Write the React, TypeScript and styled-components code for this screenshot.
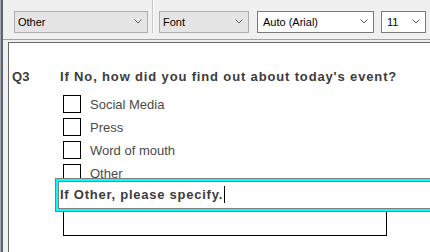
import React from 'react';
import styled, { createGlobalStyle } from 'styled-components';

const GlobalStyle = createGlobalStyle`
  html, body {
    margin: 0;
    padding: 0;
    background: #f0f0f0;
    overflow: hidden;
  }
  body {
    font-family: "Liberation Sans", Arial, sans-serif;
  }
`;

const options = ['Social Media', 'Press', 'Word of mouth', 'Other'];

const Chevron = () => (
  <svg width="8" height="5" viewBox="0 0 8 5">
    <path d="M0.5 0.5 L4 4 L7.5 0.5" fill="none" stroke="#606060" strokeWidth="1" />
  </svg>
);

const App = () => {
  return (
    <>
      <GlobalStyle />
      <Window>
        <Main>
          <Toolbar>
            <Combo $width={134} $flat>
              <span>Other</span>
              <Chevron />
            </Combo>
            <Separator />
            <Combo $width={90} $flat>
              <span>Font</span>
              <Chevron />
            </Combo>
            <Combo $width={117} $space={8}>
              <span>Auto (Arial)</span>
              <Chevron />
            </Combo>
            <Combo $width={45} $space={7}>
              <span>11</span>
              <Chevron />
            </Combo>
          </Toolbar>

          <Workspace>
            <Document>
              <QuestionRow>
                <QNumber>Q3</QNumber>
                <QText>If No, how did you find out about today's event?</QText>
              </QuestionRow>

              <OptionList>
                {options.map((opt) => (
                  <Option key={opt}>
                    <Checkbox />
                    <OptionLabel>{opt}</OptionLabel>
                  </Option>
                ))}
              </OptionList>

              <AnswerBox />

              <EditField>
                <EditText>If Other, please specify.</EditText>
                <Caret />
              </EditField>
            </Document>
          </Workspace>
        </Main>
      </Window>
    </>
  );
};

export default App;

const Window = styled.div`
  display: flex;
  height: 252px;
  border-left: 1px solid #a3a7ad;
  overflow: hidden;
`;

const Main = styled.div`
  flex: 1;
  display: flex;
  flex-direction: column;
  border-left: 2px solid #5e646e;
  background: #f0f0f0;
`;

const Toolbar = styled.div`
  display: flex;
  align-items: flex-start;
  height: 40px;
  box-sizing: border-box;
  padding: 11px 0 0 11px;
  border-bottom: 1px solid #a0a0a0;
`;

const Combo = styled.div<{ $width: number; $flat?: boolean; $space?: number }>`
  display: flex;
  align-items: center;
  justify-content: space-between;
  box-sizing: border-box;
  flex: none;
  width: ${(p) => p.$width}px;
  height: 22px;
  margin-left: ${(p) => p.$space || 0}px;
  padding: 0 5px 1px ${(p) => (p.$flat ? 3 : 5)}px;
  background: ${(p) => (p.$flat ? '#e5e5e5' : '#ffffff')};
  border: 1px solid ${(p) => (p.$flat ? '#adadad' : '#7a7a7a')};
  font-size: 11px;
  color: #000;
`;

const Separator = styled.div`
  flex: none;
  width: 1px;
  height: 33px;
  margin: -11px 5px 0 4px;
  background: #c8c8c8;
  border-right: 1px solid #fafafa;
`;

const Workspace = styled.div`
  flex: 1;
  display: flex;
  padding: 2px 0 0 5px;
`;

const Document = styled.div`
  position: relative;
  flex: 1;
  background: #ffffff;
  border-top: 1px solid #696969;
  border-left: 1px solid #696969;
  padding: 25px 0 0 3px;
`;

const QuestionRow = styled.div`
  display: grid;
  grid-template-columns: 48px 1fr;
  line-height: 18px;
  font-size: 13px;
  font-weight: 700;
  color: #3c3c3c;
  white-space: nowrap;
`;

const QNumber = styled.span`
  letter-spacing: 0.2px;
`;

const QText = styled.span`
  letter-spacing: 0.85px;
`;

const OptionList = styled.div`
  display: flex;
  flex-direction: column;
  gap: 5px;
  margin: 9px 0 0 51px;
`;

const Option = styled.div`
  display: flex;
  align-items: center;
  gap: 9px;
  height: 18px;
`;

const Checkbox = styled.div`
  width: 18px;
  height: 18px;
  box-sizing: border-box;
  border: 1px solid #000;
  background: #fff;
`;

const OptionLabel = styled.span`
  font-size: 13px;
  color: #4a4a4a;
  white-space: nowrap;
`;

const AnswerBox = styled.div`
  width: 324px;
  height: 50px;
  box-sizing: border-box;
  margin: 4px 0 0 51px;
  border: 1px solid #000;
`;

const EditField = styled.div`
  position: absolute;
  left: 46px;
  top: 135px;
  right: -20px;
  height: 34px;
  box-sizing: border-box;
  display: flex;
  align-items: center;
  padding: 0 0 2px 4px;
  background: #ffffff;
  border: 1px solid #7f7f7f;
  box-shadow: inset 0 0 0 2px #00ffff, inset 0 0 0 3px #7f7f7f;
`;

const EditText = styled.span`
  font-size: 13px;
  font-weight: 700;
  letter-spacing: 0.75px;
  color: #3c3c3c;
  white-space: nowrap;
`;

const Caret = styled.span`
  display: inline-block;
  width: 1px;
  height: 17px;
  margin-left: 1px;
  background: #000;
`;
